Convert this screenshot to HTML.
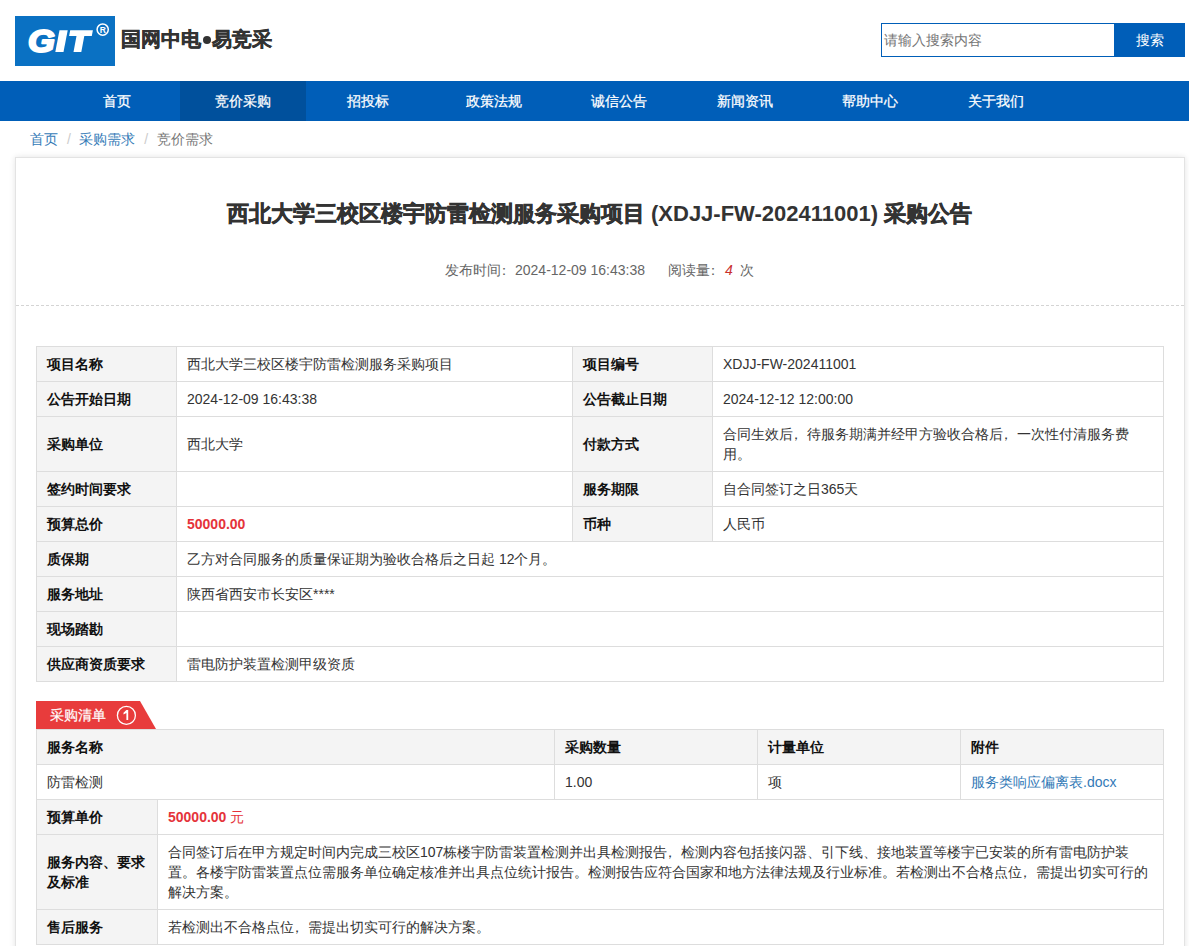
<!DOCTYPE html>
<html><head><meta charset="utf-8">
<style>
*{margin:0;padding:0;box-sizing:border-box}
html,body{width:1189px;height:946px;overflow:hidden;background:#fff}
body{font-family:"Liberation Sans",sans-serif;font-size:14px;color:#333;position:relative}
.abs{position:absolute}
.sk{font-weight:bold;-webkit-text-stroke:0.6px #333}
#brand{-webkit-text-stroke:0.5px #333}
#logo{left:15px;top:16px;width:100px;height:50px;background:#0a71c3}
#brand{left:121px;top:26px;font-size:20px;font-weight:bold;color:#333;line-height:26px;white-space:nowrap}
#search{left:881px;top:23px;width:233px;height:34px;border:1px solid #005eb8;border-right:none}
#search span{position:absolute;left:2px;top:7px;color:#757575;line-height:18px;white-space:nowrap}
#sbtn{left:1114px;top:23px;width:71px;height:34px;background:#005eb8;color:#fff;text-align:center;line-height:34px}
#nav{left:0;top:81px;width:1189px;height:40px;background:#005eb8}
.ni{position:absolute;top:0;height:40px;width:125.47px;line-height:40px;text-align:center;color:#fff;white-space:nowrap;-webkit-text-stroke:0.25px #fff}
.ni.act{background:#00509c}
#crumb{left:30px;top:129px;line-height:20px;white-space:nowrap;color:#777}
#crumb a{color:#337ab7;text-decoration:none}
#crumb .sep{color:#ccc;padding:0 4.5px 0 9px}
#card{left:15px;top:157px;width:1170px;height:900px;border:1px solid #e3e3e3;box-shadow:0 0 6px rgba(0,0,0,.11);background:#fff}
#title{left:0;top:199px;width:1199px;text-align:center;font-size:22px;font-weight:bold;color:#333;line-height:30px;white-space:nowrap}
#meta{left:445px;top:260px;text-align:left;color:#666;line-height:20px;white-space:nowrap}
.cl{position:relative;left:-4px}
#meta i{color:#c9302c;font-style:italic}
#dash{left:16px;top:305px;width:1168px;height:1px;background:repeating-linear-gradient(90deg,#d4d4d4 0 3px,transparent 3px 5px)}
table{position:absolute;border-collapse:collapse;table-layout:fixed}
td{border:1px solid #ddd;padding:7px 10px;line-height:20px;vertical-align:middle;white-space:nowrap;color:#333}
td.l{background:#f4f4f4;font-weight:bold;color:#111}
.red{color:#e5333a;font-weight:bold}
#t1{left:36px;top:346px;width:1127px}
#t2{left:36px;top:729px;width:1127px}
#tab{left:36px;top:701px;width:120px;height:28px}
#tab span{position:absolute;left:14px;top:4px;color:#fff;line-height:20px;white-space:nowrap}
a.lnk{color:#337ab7;text-decoration:none}
</style></head><body>
<div id="logo" class="abs">
<svg width="100" height="50" viewBox="0 0 100 50">
<text transform="translate(13.0,36.1) scale(1.08,0.97)" font-family="Liberation Sans" font-weight="bold" font-style="italic" font-size="32" fill="#fff" stroke="#fff" stroke-width="2.2" stroke-linejoin="round">G</text>
<polygon points="40.3,36.1 48.5,36.1 52.7,14.2 44.5,14.2" fill="#fff"/>
<polygon points="55.2,14.2 77.9,14.2 76.8,20.1 69.3,20.1 66.3,36.1 58.5,36.1 61.5,20.1 54.1,20.1" fill="#fff"/>
<circle cx="87.7" cy="13.6" r="5.6" fill="none" stroke="#fff" stroke-width="1.5"/>
<text x="87.8" y="16.7" font-family="Liberation Sans" font-weight="bold" font-size="8.5" fill="#fff" text-anchor="middle">R</text>
</svg>
</div>
<div id="brand" class="abs">国网中电<span style="display:inline-block;width:11px;height:20px;position:relative;vertical-align:top"><span style="position:absolute;left:1.5px;top:9.5px;width:8px;height:8px;border-radius:50%;background:#333"></span></span>易竞采</div>
<div id="search" class="abs"><span>请输入搜索内容</span></div>
<div id="sbtn" class="abs">搜索</div>
<div id="nav" class="abs">
<div class="ni" style="left:54.75px">首页</div>
<div class="ni act" style="left:180.22px">竞价采购</div>
<div class="ni" style="left:305.69px">招投标</div>
<div class="ni" style="left:431.16px">政策法规</div>
<div class="ni" style="left:556.63px">诚信公告</div>
<div class="ni" style="left:682.1px">新闻资讯</div>
<div class="ni" style="left:807.57px">帮助中心</div>
<div class="ni" style="left:933.04px">关于我们</div>
</div>
<div id="crumb" class="abs"><a>首页</a><span class="sep">/</span> <a>采购需求</a><span class="sep">/</span> 竞价需求</div>
<div id="card" class="abs"></div>
<div id="title" class="abs"><b class="sk">西北大学三校区楼宇防雷检测服务采购项目</b> (XDJJ-FW-202411001) <b class="sk">采购公告</b></div>
<div id="meta" class="abs">发布时间<span class="cl">：</span>2024-12-09 16:43:38<span style="display:inline-block;width:23px"></span>阅读量<span class="cl">：</span><i style="margin-left:1px">4</i><span style="margin-left:7px">次</span></div>
<div id="dash" class="abs"></div>

<table id="t1">
<colgroup><col style="width:140px"><col style="width:396px"><col style="width:140px"><col style="width:451px"></colgroup>
<tr><td class="l">项目名称</td><td>西北大学三校区楼宇防雷检测服务采购项目</td><td class="l">项目编号</td><td>XDJJ-FW-202411001</td></tr>
<tr><td class="l">公告开始日期</td><td>2024-12-09 16:43:38</td><td class="l">公告截止日期</td><td>2024-12-12 12:00:00</td></tr>
<tr><td class="l">采购单位</td><td>西北大学</td><td class="l">付款方式</td><td>合同生效后<span class="cl">，</span>待服务期满并经甲方验收合格后<span class="cl">，</span>一次性付清服务费<br>用。</td></tr>
<tr><td class="l">签约时间要求</td><td></td><td class="l">服务期限</td><td>自合同签订之日365天</td></tr>
<tr><td class="l">预算总价</td><td><span class="red">50000.00</span></td><td class="l">币种</td><td>人民币</td></tr>
<tr><td class="l">质保期</td><td colspan="3">乙方对合同服务的质量保证期为验收合格后之日起 12个月。</td></tr>
<tr><td class="l">服务地址</td><td colspan="3">陕西省西安市长安区****</td></tr>
<tr><td class="l">现场踏勘</td><td colspan="3"></td></tr>
<tr><td class="l">供应商资质要求</td><td colspan="3">雷电防护装置检测甲级资质</td></tr>
</table>

<svg id="tab" class="abs" width="120" height="28" style="position:absolute;left:36px;top:701px"><polygon points="0,0 104,0 120,28 0,28" fill="#e83c3c"/></svg>
<div class="abs" style="left:50px;top:705px;color:#fff;line-height:20px;white-space:nowrap;-webkit-text-stroke:0.2px #fff">采购清单</div>
<svg class="abs" style="left:116px;top:705px" width="21" height="21"><circle cx="10.4" cy="10.4" r="9" fill="none" stroke="#fff" stroke-width="1.3"/><polygon points="10.4,5 12.2,5 12.2,15 10.4,15 10.4,7.9 7.5,9.5 7.5,7.8" fill="#fff"/></svg>

<table id="t2">
<colgroup><col style="width:121px"><col style="width:397px"><col style="width:203px"><col style="width:203px"><col style="width:203px"></colgroup>
<tr><td class="l" colspan="2">服务名称</td><td class="l">采购数量</td><td class="l">计量单位</td><td class="l">附件</td></tr>
<tr><td colspan="2">防雷检测</td><td>1.00</td><td>项</td><td><a class="lnk">服务类响应偏离表.docx</a></td></tr>
<tr><td class="l">预算单价</td><td colspan="4"><span class="red">50000.00</span> <span style="color:#e5333a">元</span></td></tr>
<tr><td class="l">服务内容、要求<br>及标准</td><td colspan="4">合同签订后在甲方规定时间内完成三校区107栋楼宇防雷装置检测并出具检测报告<span class="cl">，</span>检测内容包括接闪器、引下线、接地装置等楼宇已安装的所有雷电防护装<br>置。各楼宇防雷装置点位需服务单位确定核准并出具点位统计报告。检测报告应符合国家和地方法律法规及行业标准。若检测出不合格点位<span class="cl">，</span>需提出切实可行的<br>解决方案。</td></tr>
<tr><td class="l">售后服务</td><td colspan="4">若检测出不合格点位<span class="cl">，</span>需提出切实可行的解决方案。</td></tr>
</table>
</body></html>
